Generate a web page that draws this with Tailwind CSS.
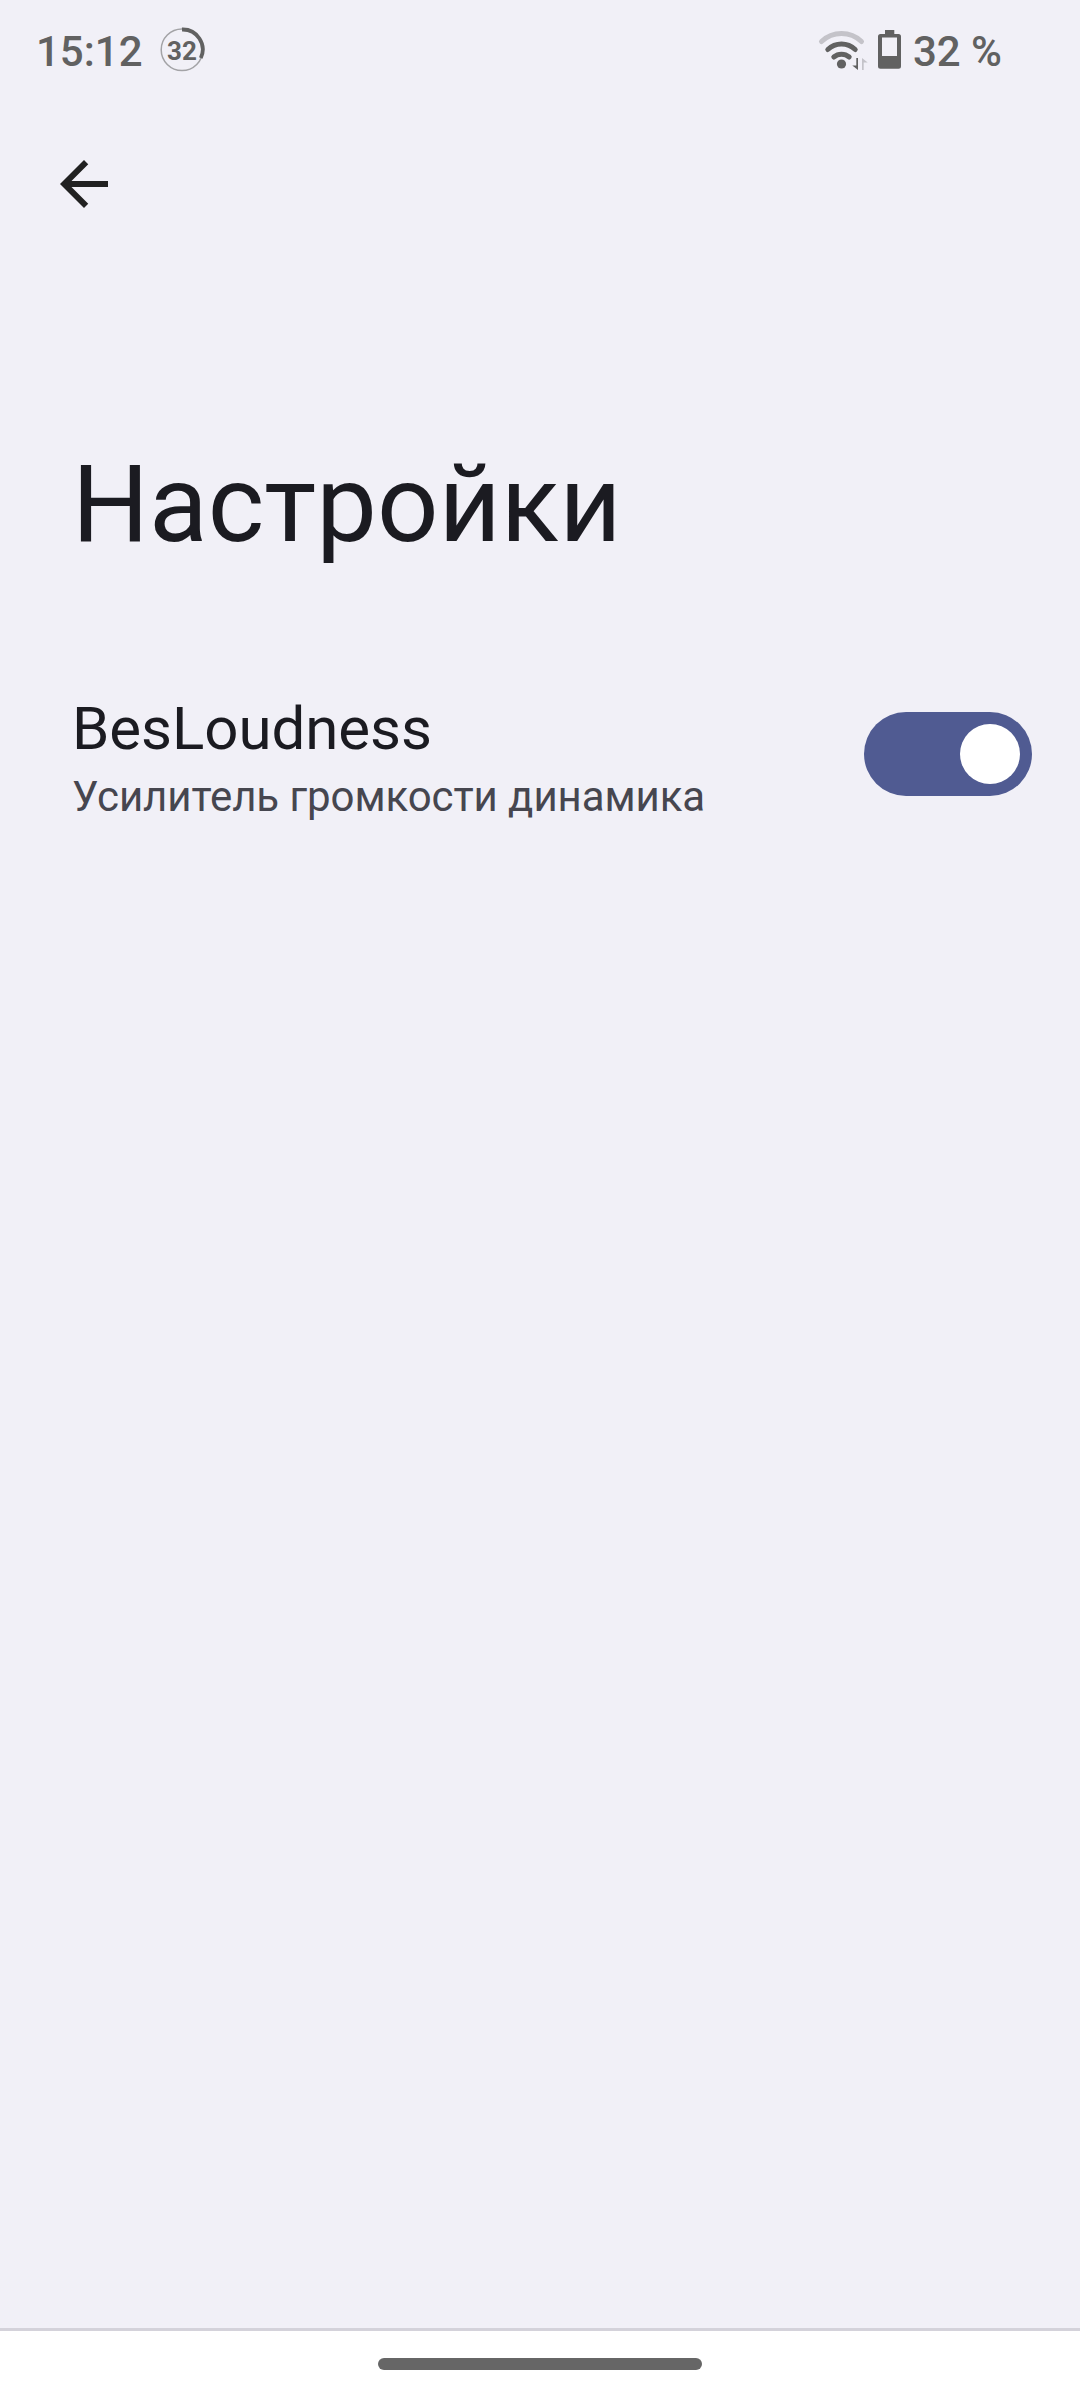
<!DOCTYPE html>
<html lang="ru">
<head>
<meta charset="utf-8">
<title>Настройки</title>
<script src="https://cdn.jsdelivr.net/npm/@tailwindcss/browser@4"></script>
</head>
<body class="flex h-[2400px] w-[1080px] flex-col overflow-hidden bg-[#f1f0f7] font-['Roboto',sans-serif] text-[#1b1b21]">
  <header class="flex h-[103px] shrink-0 items-center justify-between pl-9 pr-[78px] text-[42px] font-medium leading-[103px] text-[#616161]">
    <div class="flex items-center">
      <span class="w-[122px] whitespace-nowrap">15:12</span>
      <svg class="block h-[103px] w-12" viewBox="158 0 48 103" fill="none">
        <circle cx="182" cy="49.700" r="20.800" stroke="#a3a3a6" stroke-width="1.500"/>
        <path d="M182 29.500A20 20 0 0 1 200.800 58" stroke="#616161" stroke-width="3.800"/>
        <text x="182" y="59.500" text-anchor="middle" font-size="26" font-weight="700" fill="#616161">32</text>
      </svg>
    </div>
    <div class="flex items-center">
      <svg class="block h-[103px] w-[96px]" viewBox="817 0 96 103" fill="none">
        <g stroke-width="5" stroke-linecap="round">
          <path d="M821.500 41.500A29 29 0 0 1 861.500 41.500" stroke="#c4c3c9"/>
          <path d="M827.800 49.500A20 20 0 0 1 855.200 49.500" stroke="#616161"/>
          <path d="M833.800 57A12 12 0 0 1 849.200 57" stroke="#616161"/>
        </g>
        <circle cx="841.500" cy="64" r="4.600" fill="#616161"/>
        <path d="M856.300 58H858V70L852.300 65.500H856.300Z" fill="#616161"/>
        <path d="M862 70V58L867.700 62.600H863.700V70Z" fill="#c4c3c9"/>
        <path fill="#616161" fill-rule="evenodd" d="M885 30H894.300V34H898.500Q901 34 901 36.500V66.300Q901 68.800 898.500 68.800H880.500Q878 68.800 878 66.300V36.500Q878 34 880.500 34H885ZM882 37.500V56H897V37.500Z"/>
      </svg>
      <span class="whitespace-nowrap">32 %</span>
    </div>
  </header>
  <nav class="h-[337px] shrink-0 pl-12 pt-[45px]">
    <svg class="block size-[72px]" viewBox="0 0 24 24" fill="#212121" role="img" aria-label="Назад"><path d="M20 11H7.830l5.590-5.590L12 4l-8 8 8 8 1.410-1.410L7.830 13H20v-2z"/></svg>
  </nav>
  <main class="grow">
    <h1 class="pl-[72px] text-[108px] leading-[128px]">Настройки</h1>
    <div class="mt-[125px] flex items-start justify-between pl-[72px] pr-12">
      <div>
        <div class="text-[60px] leading-[72px] tracking-[-0.05px]">BesLoudness</div>
        <div class="mt-[7px] text-[42px] leading-[50px] tracking-[-0.07px] text-[#46464f]">Усилитель громкости динамика</div>
      </div>
      <div class="mt-[19px] flex h-[84px] w-[168px] items-center justify-end rounded-full bg-[#505b92] pr-3" role="switch" aria-checked="true">
        <div class="size-[60px] rounded-full bg-white"></div>
      </div>
    </div>
  </main>
  <footer class="flex h-[72px] shrink-0 justify-center border-t-[3px] border-[#d4d2da] bg-white pt-[27px]">
    <div class="h-3 w-[324px] rounded-full bg-[#666666]"></div>
  </footer>
</body>
</html>
